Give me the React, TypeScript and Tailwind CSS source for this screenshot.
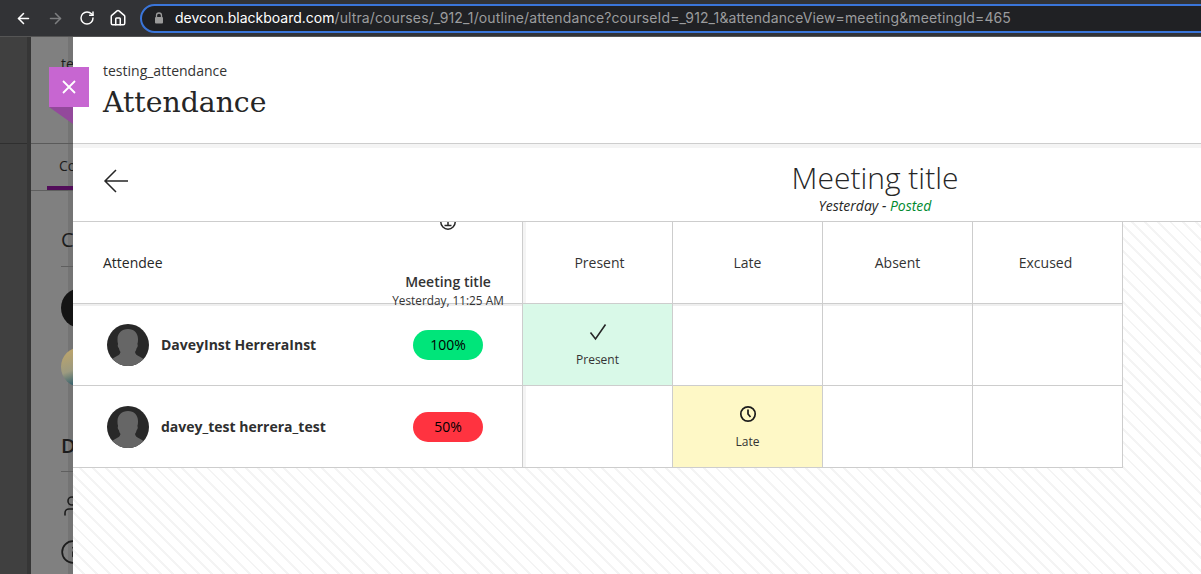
import { ArrowLeft, ArrowRight, RotateCw, House, User, Info } from 'lucide-react'

const openSans = "font-['Open_Sans',sans-serif]"

function Avatar() {
  return (
    <svg width="42" height="42" viewBox="0 0 42 42" className="shrink-0">
      <clipPath id="avatar-clip">
        <circle cx="21" cy="21" r="21" />
      </clipPath>
      <g clipPath="url(#avatar-clip)">
        <rect width="42" height="42" fill="#282828" />
        <path
          d="M21 5c6 0 10 4 10 10 0 2 0 3-.6 5 .6 1 .5 3-.7 4-.5 2-1 3-1.700 4 .4 2 1.500 3 3.500 4 3 1.500 6 3 7 6v6H3v-6c1-3 4-4.500 7-6 2-1 3.100-2 3.500-4-.7-1-1.200-2-1.700-4-1.200-1-1.300-3-.7-4-.6-2-.6-3-.6-5C10.500 9 15 5 21 5z"
          fill="#666666"
        />
      </g>
    </svg>
  )
}

function Pill({ value, color }: { value: string; color: string }) {
  return (
    <div className={`w-[70px] h-[30px] rounded-full flex items-center justify-center text-sm font-medium text-black ${color}`}>
      {value}
    </div>
  )
}

function NameCell({ name, grade, color, first }: { name: string; grade: string; color: string; first?: boolean }) {
  return (
    <div
      className={`h-[82px] border-b border-[#cdcdcd] flex items-center pl-[34px] ${first ? 'shadow-[inset_0_2px_0_#efefef]' : ''}`}
    >
      <Avatar />
      <span className="ml-3 w-[252px] text-sm font-bold text-[#2f2f2f]">{name}</span>
      <Pill value={grade} color={color} />
    </div>
  )
}

function Cell({ className = '', children }: { className?: string; children?: React.ReactNode }) {
  return (
    <div className={`h-[82px] border-b border-[#cdcdcd] border-r flex flex-col items-center justify-center ${className}`}>
      {children}
    </div>
  )
}

export default function App() {
  return (
    <div className={`relative w-[1201px] h-[574px] overflow-hidden flex flex-col bg-white ${openSans}`}>
      {/* Browser bar */}
      <div className="h-[37px] shrink-0 bg-[#323336] border-b border-[#555] flex items-center pl-[15px] font-['Inter',sans-serif]">
        <ArrowLeft size={17} strokeWidth={2.2} className="text-white shrink-0" />
        <ArrowRight size={17} strokeWidth={2.2} className="text-[#7d7e80] ml-[15px] shrink-0" />
        <RotateCw size={16} strokeWidth={2.2} className="text-white ml-[15px] shrink-0" />
        <House size={18} strokeWidth={2} className="text-white ml-[14px] shrink-0" />
        <div className="ml-[13px] h-[29px] w-[1120px] shrink-0 rounded-full bg-[#202124] border-2 border-[#3a75d9] flex items-center pl-3 text-sm whitespace-nowrap">
          <svg width="10" height="12" viewBox="0 0 10 12" className="shrink-0">
            <path d="M2.500 5V3.500a2.500 2.500 0 0 1 5 0V5" fill="none" stroke="#9a9a9a" strokeWidth="1.300" />
            <rect x="1" y="5" width="8" height="6.500" rx="1" fill="#9a9a9a" />
          </svg>
          <span className="ml-[11px] text-white">devcon.blackboard.com</span>
          <span className="text-[#9b9c9e] tracking-[0.11px]">
            /ultra/courses/_912_1/outline/attendance?courseId=_912_1&amp;attendanceView=meeting&amp;meetingId=465
          </span>
        </div>
      </div>

      <div className="flex flex-1 min-h-0">
        {/* Dimmed page behind the panel */}
        <div className="w-[31px] shrink-0 bg-[#404040] border-r-4 border-[#363636]">
          <div className="h-[107px] border-b border-[#2f2f2f]" />
        </div>
        <div className="w-[42px] shrink-0 bg-[#808080] shadow-[inset_-5px_0_0_#747474] overflow-hidden text-[#1c1c1c]">
          <div className="h-[107px] border-b border-[#5a5a5a] pl-[30px] pt-[17px] text-sm whitespace-nowrap">
            te
          </div>
          <div className="h-[42px] pl-[28px] pt-[12px] text-sm whitespace-nowrap">Co</div>
          <div className="border-b border-[#5f5f5f] pl-[16px]">
            <div className="h-[4px] bg-[#520d5a]" />
          </div>
          <div className="mt-[36px] pl-[30px] text-[20px] leading-[26px]">C</div>
          <div className="ml-[30px] mt-[13px] h-px bg-[#5f5f5f]" />
          <div className="ml-[30px] mt-[21px] w-10 h-10 rounded-full bg-[#141414]" />
          <div className="ml-[30px] mt-[19px] w-10 h-10 rounded-full bg-[linear-gradient(160deg,#c4a766_0%,#9c9a80_50%,#2a5a6a_80%)]" />
          <div className="mt-[46px] pl-[30px] text-[20px] leading-[26px] font-semibold">D</div>
          <div className="ml-[30px] mt-[12px] h-px bg-[#5f5f5f]" />
          <User size={24} strokeWidth={1.600} className="ml-[29px] mt-[22px]" />
          <Info size={26} strokeWidth={1.600} className="ml-[29px] mt-[21px]" />
        </div>

        {/* Panel */}
        <div className="flex-1 min-w-0 flex flex-col bg-white">
          <div className="relative z-20 h-[107px] shrink-0 bg-white border-b border-[#cdcdcd] pl-[30px] pt-[26px]">
            <div className="text-sm leading-4 text-[#333]">testing_attendance</div>
            <h1 className="mt-[6px] font-['DejaVu_Serif',serif] text-[28.300px] leading-[36px] text-[#262626]">Attendance</h1>
          </div>
          <div className="relative z-20 h-1 shrink-0 bg-[#f4f4f4]" />
          <div className="relative z-20 h-[74px] shrink-0 bg-white border-b border-[#cdcdcd] flex">
            <div className="w-[449px] shrink-0 pl-[30px] flex items-center pb-[8px]">
              <svg width="26" height="26" viewBox="0 0 26 26" fill="none" stroke="#262626" strokeWidth="1.500">
                <path d="M25 13H2M13 2 2 13l11 11" />
              </svg>
            </div>
            <div className="w-[706px] shrink-0 text-center pt-[11px]">
              <div className="text-[30px] leading-[38px] font-light text-[#262626]">Meeting title</div>
              <div className="text-sm leading-[18px] italic text-[#262626]">
                Yesterday - <span className="text-[#008a30]">Posted</span>
              </div>
            </div>
          </div>

          <div className="flex-1 min-h-0 bg-[repeating-linear-gradient(45deg,#ffffff_0px,#ffffff_7px,#f4f4f4_7px,#f4f4f4_9px)]">
            <div className="w-[1050px] grid grid-cols-[450px_150px_150px_150px_150px] bg-white">
              {/* Header row */}
              <div className="relative h-[82px] border-b border-[#cdcdcd] border-r">
                <div className="h-full flex items-center pl-[30px] text-sm font-medium text-[#262626]">Attendee</div>
                <div className="absolute left-[295px] top-[-8px] w-[160px] flex flex-col items-center">
                  <svg width="16" height="16" viewBox="0 0 16 16" fill="none" stroke="#262626" strokeWidth="1.500">
                    <circle cx="8" cy="8" r="7.200" />
                    <path d="M4.500 11.500h7M8 7v4" />
                  </svg>
                  <div className="mt-[42px] text-sm leading-5 font-semibold text-[#333]">Meeting title</div>
                  <div className="text-[11.800px] leading-4 text-[#333] whitespace-nowrap">Yesterday, 11:25 AM</div>
                </div>
              </div>
              <Cell className="pl-1 text-sm text-[#333] shadow-[inset_3px_0_0_#f4f4f4]">Present</Cell>
              <Cell className="text-sm text-[#333]">Late</Cell>
              <Cell className="text-sm text-[#333]">Absent</Cell>
              <Cell className="pr-1 text-sm text-[#333]">Excused</Cell>

              {/* Row 1 */}
              <div className="border-r border-[#cdcdcd]">
                <NameCell name="DaveyInst HerreraInst" grade="100%" color="bg-[#00e57a]" first />
              </div>
              <Cell className="pt-[2px] bg-[#d9f9e8] text-xs text-[#333]">
                <svg width="18" height="18" viewBox="0 0 18 18" fill="none" stroke="#262626" strokeWidth="1.600">
                  <path d="M1.500 9.500 6.500 16 16.500 1.500" />
                </svg>
                <span className="mt-[11px]">Present</span>
              </Cell>
              <Cell className="shadow-[inset_0_2px_0_#efefef]" />
              <Cell className="shadow-[inset_0_2px_0_#efefef]" />
              <Cell className="shadow-[inset_0_2px_0_#efefef]" />

              {/* Row 2 */}
              <div className="border-r border-[#cdcdcd]">
                <NameCell name="davey_test herrera_test" grade="50%" color="bg-[#ff3340]" />
              </div>
              <Cell className="shadow-[inset_3px_0_0_#f4f4f4]" />
              <Cell className="pt-[2px] bg-[#fef8c6] text-xs text-[#333]">
                <svg width="18" height="18" viewBox="0 0 18 18" fill="none" stroke="#1c1c1c" strokeWidth="1.700">
                  <circle cx="9" cy="9" r="7.200" />
                  <path d="M9 4.500V9l2.500 3" />
                </svg>
                <span className="mt-[11px]">Late</span>
              </Cell>
              <Cell />
              <Cell />
            </div>
          </div>
        </div>
      </div>

      {/* Close tab hanging over the panel edge */}
      <div className="absolute z-30 left-[49px] top-[67px] w-10 h-10 bg-[#c766d1] flex items-center justify-center">
        <svg width="16" height="16" viewBox="0 0 16 16" stroke="#ffffff" strokeWidth="1.800">
          <path d="M2 2l12 12M14 2 2 14" />
        </svg>
      </div>
      <svg width="24" height="17" viewBox="0 0 24 17" className="absolute z-30 left-[49px] top-[107px]">
        <polygon points="0,0 24,0 24,17" fill="#93499b" />
      </svg>
    </div>
  )
}
